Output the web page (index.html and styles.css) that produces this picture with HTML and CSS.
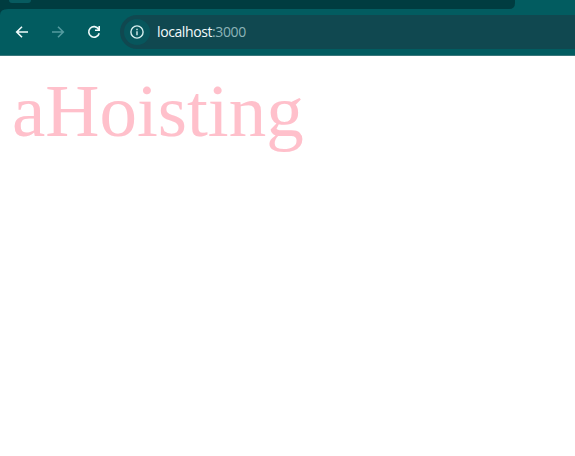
FILE: index.html
```html
<!DOCTYPE html>
<html lang="en">
<head>
<meta charset="utf-8">
<title>localhost:3000</title>
<link rel="stylesheet" href="styles.css">
</head>
<body>
<header class="browser">
  <div class="tabstrip"><div class="tabs"><span class="tab-hint"></span></div></div>
  <nav class="toolbar">
    <svg class="icon" viewBox="0 0 16 16"><path d="M14 8H3M8 2.7L2.7 8L8 13.3"/></svg>
    <svg class="icon dim" viewBox="0 0 16 16"><path d="M2 8H13M8 2.7L13.3 8L8 13.3"/></svg>
    <svg class="icon" viewBox="0 0 16 16"><path d="M12.6 5.2A5.3 5.3 0 1 0 13.2 9.2M13.2 2V6.2H9"/></svg>
    <div class="address">
      <span class="info"><svg class="info-icon" viewBox="0 0 16 16"><circle cx="8" cy="8" r="6.1"/><path d="M8 7.3V11.2M8 4.7V6.2"/></svg></span>
      <span class="url">localhost<span class="port">:3000</span></span>
    </div>
  </nav>
</header>
<main class="page">aHoisting</main>
</body>
</html>
```
FILE: styles.css
```css
body {
  margin: 0;
  background: #fff;
  overflow: hidden;
}
.browser {
  height: 56px;
  background: #025c60;
}
.tabstrip {
  height: 9px;
}
.tabs {
  width: 515px;
  height: 15px;
  clip-path: path("M0 0H515V3Q515 9 509 9H8Q0 9 0 15Z");
  background: #003c40;
}
.tab-hint {
  display: block;
  width: 22px;
  height: 3px;
  margin-left: 9px;
  background: #075b60;
  border-radius: 0 0 10px 10px;
}
.toolbar {
  display: flex;
  align-items: center;
  height: 46px;
  padding-left: 14px;
  gap: 20px;
  border-bottom: 1px solid #39777b;
}
.icon {
  flex: none;
  width: 16px;
  height: 16px;
  fill: none;
  stroke: #f0fbfb;
  stroke-width: 1.6;
}
.dim {
  stroke: #549b9f;
}
.address {
  display: flex;
  align-items: center;
  flex: 1;
  height: 34px;
  margin-left: -2px;
  background: #104850;
  border-radius: 17px 0 0 17px;
}
.info {
  display: flex;
  align-items: center;
  justify-content: center;
  width: 26px;
  height: 26px;
  margin-left: 4px;
  background: #07565c;
  border-radius: 50%;
}
.info-icon {
  width: 16px;
  height: 16px;
  fill: none;
  stroke: #d6eeee;
  stroke-width: 1.4;
}
.url {
  margin-left: 7px;
  font: 14px/20px "Open Sans", "Noto Sans", sans-serif;
  letter-spacing: -0.4px;
  color: #f2fbfb;
}
.port {
  color: #8db4b8;
}
.page {
  padding: 12px;
  font: 75px/86px "Liberation Serif", serif;
  color: #ffc0cb;
}
```
